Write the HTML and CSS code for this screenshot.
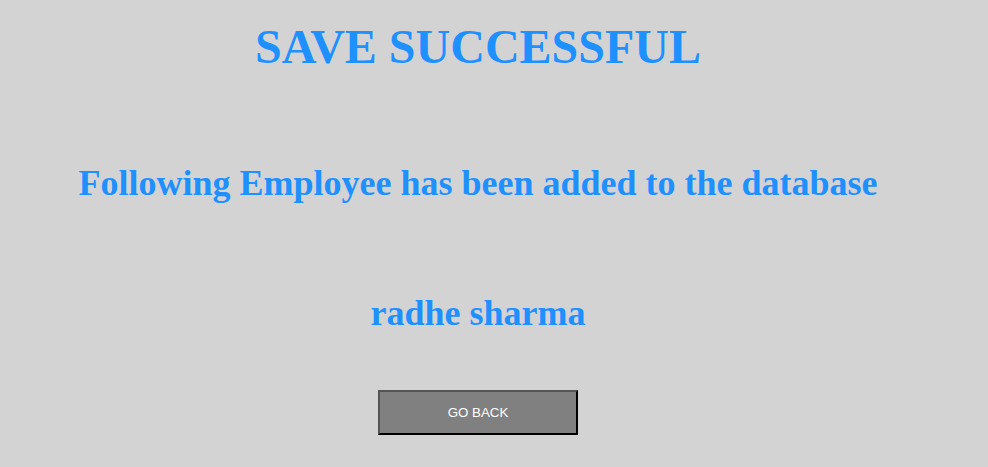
FILE: index.html
```html
<!DOCTYPE html>
<html lang="en">
<head>
<meta charset="utf-8">
<title>Save Successful</title>
<link rel="stylesheet" href="styles.css">
</head>
<body>
<main class="message">
<h1 class="title">SAVE SUCCESSFUL</h1>
<h2 class="line">Following Employee has been added to the database</h2>
<h2 class="line">radhe sharma</h2>
<button class="back" type="button">GO BACK</button>
</main>
</body>
</html>
```
FILE: styles.css
```css
body {
  margin: 0;
  background: lightgray;
  font-family: "Liberation Serif", "Times New Roman", serif;
}

.message {
  display: flex;
  flex-direction: column;
  align-items: center;
  padding: 20px 32px 32px 0;
  color: dodgerblue;
  text-align: center;
}

.title {
  margin: 0;
  font-size: 48px;
  line-height: 54px;
}

.line {
  margin: 89px 0 0;
  font-size: 36px;
  line-height: 41px;
}

.back {
  width: 200px;
  height: 45px;
  margin-top: 56px;
  border: 2px outset black;
  background: gray;
  color: white;
  font-family: "Liberation Sans", Arial, sans-serif;
}
```
